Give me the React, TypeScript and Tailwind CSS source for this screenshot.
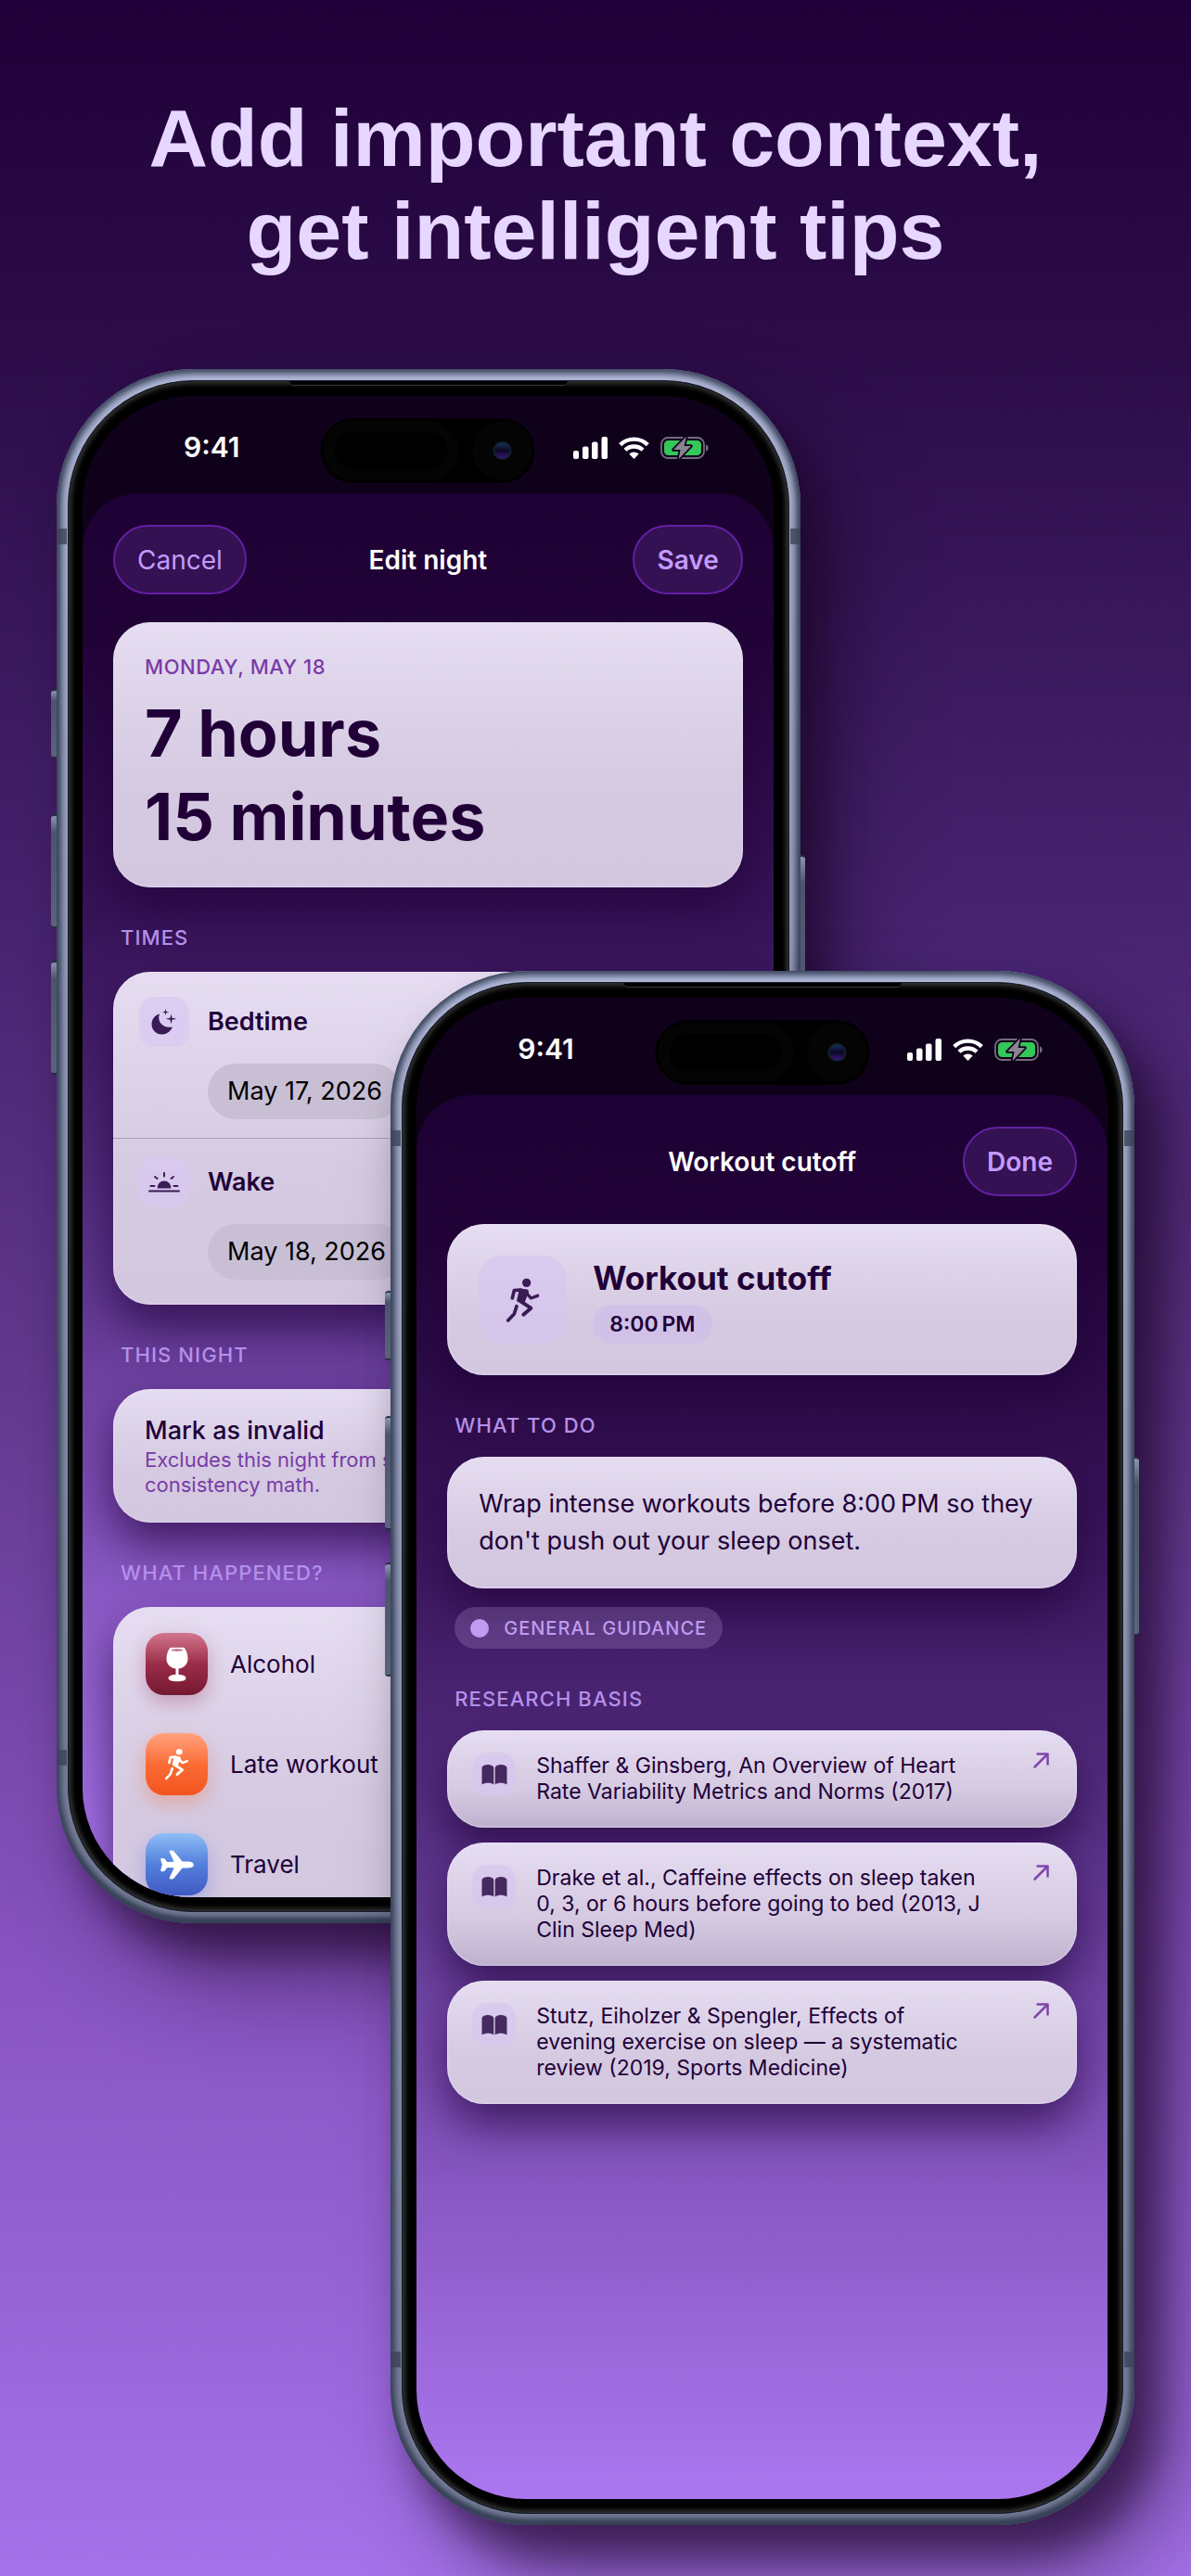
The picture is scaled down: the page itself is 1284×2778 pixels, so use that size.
import type { ReactNode } from "react";
import { IoAirplane } from "react-icons/io5";

function Runner({ className }: { className: string }) {
  return (
    <svg viewBox="430 1036 130 156" className={className} fill="none" stroke="currentColor" strokeLinecap="round" strokeLinejoin="round" aria-hidden="true">
      <circle cx="507" cy="1058" r="14" fill="currentColor" stroke="none" />
      <path d="M461 1108L467 1083L490 1081" strokeWidth="11" />
      <path d="M484 1077L506 1079Q515 1081 514 1089L503 1116L499 1124L479 1121Q473 1116 477 1108Z" fill="currentColor" stroke="none" />
      <path d="M506 1090L521 1108L543 1100" strokeWidth="10" />
      <path d="M488 1118L521 1140L497 1161" strokeWidth="12" />
      <path d="M475 1134L467 1159L447 1180" strokeWidth="11" />
    </svg>
  );
}

function Moon() {
  return (
    <svg viewBox="0 0 30 28" className="w-[30px] text-[#3a1b55]" fill="currentColor" aria-hidden="true">
      <path d="M10 5.500C7 13 13 21.500 24 19.500C21.500 25 17 27.500 12.500 27.500C6 27.500 1.500 22.500 1.500 16.500C1.500 11.500 5 6.500 10 5.500Z" />
      <path d="M22.500 5.500L23.600 9.700L28.500 10.700L23.600 11.800L22.500 16.500L21.400 11.800L16.500 10.700L21.400 9.700Z" />
      <path d="M16.500 0L17.200 2.800L20 3.500L17.200 4.200L16.500 7L15.800 4.200L13 3.500L15.800 2.800Z" />
    </svg>
  );
}

function Sunrise() {
  return (
    <svg viewBox="0 0 34 22" className="w-[34px] text-[#3a1b55]" fill="none" stroke="currentColor" strokeWidth="2" strokeLinecap="round" aria-hidden="true">
      <path d="M9.500 17.500a7.500 8 0 0 1 15 0Z" fill="currentColor" stroke="none" />
      <path d="M1 20.500H33M2.500 15H6.500M27.500 15H31.500M17 1V4.500M7 5L9.500 7M27 5L24.500 7" />
    </svg>
  );
}

function Goblet() {
  return (
    <svg viewBox="0 0 24 38" className="h-[38px]" aria-hidden="true">
      <path fill="white" d="M4.500 .8H19.500C22 4 23.500 8 23.500 13C23.500 19 19 23 13.500 23.500V29.800C18 30.200 21.500 31.500 21.500 33.700C21.500 36 17.500 37.300 12 37.300S2.500 36 2.500 33.700C2.500 31.500 6 30.200 10.500 29.800V23.500C5 23 .5 19 .5 13C.5 8 2 4 4.500 .8Z" />
      <ellipse cx="12" cy="3.500" rx="6.500" ry="1.200" fill="#c4667f" />
    </svg>
  );
}

function Book() {
  return (
    <svg viewBox="0 0 28 24" className="w-7 text-[#452a60]" fill="currentColor" aria-hidden="true">
      <path d="M13.300 22.500C10.500 20.200 4 20.200 .5 22.500V4C2 .3 11.500 -.2 13.300 4Z" />
      <path d="M14.700 22.500C17.500 20.200 24 20.200 27.500 22.500V4C26 .3 16.500 -.2 14.700 4Z" />
    </svg>
  );
}

function Arrow() {
  return (
    <svg viewBox="0 0 17 17" className="w-[17px] shrink-0 text-[#7f46aa]" fill="none" stroke="currentColor" strokeWidth="2.500" strokeLinecap="round" strokeLinejoin="round" aria-hidden="true">
      <path d="M1.500 15.500L15.500 1.500M4.500 1.500H15.500V12.500" />
    </svg>
  );
}

function StatusIcons() {
  return (
    <div className="flex items-center gap-3">
      <svg viewBox="0 0 37 24" className="w-[37px] fill-white" aria-hidden="true">
        <rect x="0" y="15" width="6" height="9" rx="2" />
        <rect x="10" y="10.500" width="6.500" height="13.500" rx="2" />
        <rect x="20" y="5.500" width="6.500" height="18.500" rx="2" />
        <rect x="30.500" y="0" width="6.500" height="24" rx="2" />
      </svg>
      <svg viewBox="0 0 33 24" className="w-[33px] fill-none stroke-white" strokeWidth="4.400" aria-hidden="true">
        <path d="M1.700 8.600A21.300 21.300 0 0 1 31.300 8.600" />
        <path d="M7 14.300A13.600 13.600 0 0 1 26 14.300" />
        <path d="M11.300 18.500A8 8 0 0 1 21.700 18.500L16.500 24Z" fill="white" stroke="none" />
      </svg>
      <svg viewBox="0 0 52 26" className="w-[52px]" aria-hidden="true">
        <rect x="1" y="2" width="46" height="22" rx="7" fill="none" stroke="#756b7b" strokeWidth="1.800" />
        <rect x="4" y="5" width="40" height="16" rx="4.500" fill="#34c759" />
        <path d="M49 9.500C52.500 10.500 52.500 15.500 49 16.500Z" fill="#756b7b" />
        <path d="M28 .8L14 15H21.500L19.500 25.200L33 11H25.500Z" fill="#8b8592" stroke="#11011c" strokeWidth="3.500" strokeLinejoin="round" paintOrder="stroke" />
      </svg>
    </div>
  );
}

function SideButton({ className }: { className: string }) {
  return <span className={`absolute w-2 rounded-sm border-y-2 border-[#252e40] bg-gradient-to-b from-[#8c96b0] via-[#4a556c] via-15% to-[#5a647c] ${className}`} />;
}

function Band({ className }: { className: string }) {
  return <span className={`absolute h-[17px] w-[11px] bg-[#3b4359]/80 ${className}`} />;
}

function Phone({ className, children }: { className: string; children: ReactNode }) {
  return (
    <section className={`relative col-start-1 row-start-1 aspect-[802/1676] w-[69%] ${className}`}>
      <div className="absolute inset-0 rounded-[148px] shadow-[24px_32px_44px_rgba(26,4,36,0.6),50px_64px_100px_rgba(26,4,36,0.4)]" />
      <SideButton className="top-[345px] -left-[6px] h-[75px]" />
      <SideButton className="top-[480px] -left-[6px] h-[123px]" />
      <SideButton className="top-[638px] -left-[6px] h-[123px]" />
      <SideButton className="top-[524px] -right-[5px] h-[193px]" />
      <div className="relative h-full rounded-[148px] bg-gradient-to-b from-[#b4badb] via-[#a3aac8] via-10% to-[#737a94] p-3 shadow-[inset_0_0_7px_5px_#39445b,inset_0_-5px_5px_0_#2b3545]">
        <Band className="top-[172px] left-0" />
        <Band className="top-[172px] right-0" />
        <Band className="bottom-[170px] left-0" />
        <Band className="right-0 bottom-[170px]" />
        <div className="relative h-full rounded-[136px] border border-[#151c2e] bg-black pt-4 pr-4 pb-[15px] pl-[15px] shadow-[inset_0_0_5px_3px_#343433]">
          <span className="absolute top-0 left-1/2 h-[5px] w-[300px] -translate-x-1/2 rounded-b-lg border-b border-[#3a3a3a] bg-black" />
          <div className="h-full overflow-hidden rounded-[118px] bg-[#10011b]">
            <div className="relative flex h-[105px] items-center justify-between pt-[6px] pr-[70px] pl-[109px]">
              <time className="text-[30px] font-semibold text-white">9:41</time>
              <StatusIcons />
              <div className="absolute top-6 left-1/2 flex h-[70px] w-[231px] -translate-x-1/2 items-center justify-between rounded-full bg-black p-[3px]">
                <span className="h-16 w-[146px] rounded-full border-[12px] border-[#040404] bg-black" />
                <span className="flex size-16 items-center justify-center rounded-full bg-[#040405]">
                  <span className="size-5 rounded-full border-2 border-[#12232f] bg-gradient-to-b from-[#123060] via-[#0a0722] to-[#3c1580]" />
                </span>
              </div>
            </div>
            <div className="h-full rounded-t-[60px] bg-[linear-gradient(to_bottom,#1d0034_0%,#230439_10%,#371358_28%,#502a7b_45%,#7f50b8_68%,#9563d2_80%,#ab78f1_94%)] px-[33px] pt-[34px]">
              {children}
            </div>
          </div>
        </div>
      </div>
    </section>
  );
}

function PillButton({ children, className }: { children: ReactNode; className: string }) {
  return (
    <button type="button" className={`h-[75px] rounded-full border-2 border-[#6320a4] bg-[#341152] px-6 text-[28px] text-[#c39bff] ${className}`}>
      {children}
    </button>
  );
}

function NavBar({ left, title, right }: { left?: string; title: string; right: string }) {
  return (
    <header className="mb-[30px] grid grid-cols-[1fr_auto_1fr] items-center">
      <div>{left && <PillButton className="font-normal">{left}</PillButton>}</div>
      <h2 className="text-[28px] font-semibold text-white">{title}</h2>
      <PillButton className="justify-self-end font-semibold">{right}</PillButton>
    </header>
  );
}

const plainCard = "to-[#d3c7e0]";
const shadedCard = "to-[#c1b3d1]";

function Card({ children, className, tone = plainCard }: { children: ReactNode; className: string; tone?: string }) {
  return (
    <div className={`rounded-[40px] bg-gradient-to-b from-[#e6ddf2] via-[#d5cae1] via-60% shadow-[inset_0_0_2px_1px_rgba(240,232,250,0.5),0_24px_48px_rgba(31,2,55,0.65)] ${tone} ${className}`}>
      {children}
    </div>
  );
}

function SectionLabel({ children, className }: { children: ReactNode; className: string }) {
  return <h3 className={`relative px-2 text-[22px] leading-[28px] font-medium tracking-wider text-[#b490ea] ${className}`}>{children}</h3>;
}

function TimeRow({ icon, label, date }: { icon: ReactNode; label: string; date: string }) {
  return (
    <div className="flex gap-5 px-7 py-5">
      <span className="flex size-[54px] items-center justify-center rounded-2xl bg-[#d9c7f2]/70">{icon}</span>
      <div className="flex flex-col items-start gap-[18px]">
        <span className="text-[27px] leading-[54px] font-semibold text-[#210038]">{label}</span>
        <button type="button" className="h-[60px] rounded-full bg-[#c9bfd5] px-[21px] text-[27px] text-black">{date}</button>
      </div>
    </div>
  );
}

const events = [
  { label: "Alcohol", icon: <Goblet />, tile: "from-[#d3758e] via-[#9c2c49] to-[#741831] shadow-[0_8px_20px_rgba(140,30,70,0.3)]" },
  { label: "Late workout", icon: <Runner className="h-[37px]" />, tile: "from-[#ffa27c] via-[#fb6c35] to-[#f2541b] shadow-[0_8px_20px_rgba(250,100,50,0.35)]" },
  { label: "Travel", icon: <IoAirplane className="size-[38px]" aria-hidden="true" />, tile: "from-[#8fbdf6] via-[#5480dc] to-[#4059c4] shadow-[0_8px_20px_rgba(80,110,220,0.35)]" },
];

const papers = [
  { title: "Shaffer & Ginsberg, An Overview of Heart Rate Variability Metrics and Norms (2017)", tone: shadedCard },
  { title: "Drake et al., Caffeine effects on sleep taken 0, 3, or 6 hours before going to bed (2013, J Clin Sleep Med)", tone: shadedCard },
  { title: "Stutz, Eiholzer & Spengler, Effects of evening exercise on sleep — a systematic review (2019, Sports Medicine)", tone: plainCard },
];

function EditNight() {
  return (
    <>
      <NavBar left="Cancel" title="Edit night" right="Save" />
      <Card className="px-[34px] pt-[34px] pb-[31px]">
        <p className="text-[22px] leading-7 font-medium tracking-wide text-[#7a3ba8]">MONDAY, MAY 18</p>
        <p className="mt-[13px] text-[70px] leading-[90px] font-bold text-[#210038]">
          7 hours
          <br />
          15 minutes
        </p>
      </Card>
      <SectionLabel className="mt-10 mb-[23px]">TIMES</SectionLabel>
      <Card className="py-[7px]">
        <TimeRow icon={<Moon />} label="Bedtime" date="May 17, 2026" />
        <hr className="border-[#aba0b8]" />
        <TimeRow icon={<Sunrise />} label="Wake" date="May 18, 2026" />
      </Card>
      <SectionLabel className="mt-10 mb-[23px]">THIS NIGHT</SectionLabel>
      <Card className="px-[34px] py-[27px]">
        <p className="text-[27px] leading-9 font-medium text-[#210038]">Mark as invalid</p>
        <p className="text-[22px] leading-[27px] text-[#7a3ba8]">
          Excludes this night from s
          <br />
          consistency math.
        </p>
      </Card>
      <SectionLabel className="mt-10 mb-[23px]">WHAT HAPPENED?</SectionLabel>
      <Card className="flex flex-col gap-[41px] px-[35px] py-7">
        {events.map((e) => (
          <div key={e.label} className="flex items-center gap-6">
            <span className={`flex size-[67px] items-center justify-center rounded-[20px] bg-gradient-to-b text-white ${e.tile}`}>{e.icon}</span>
            <span className="text-[26px] text-[#210038]">{e.label}</span>
          </div>
        ))}
      </Card>
    </>
  );
}

function WorkoutCutoff() {
  return (
    <>
      <NavBar title="Workout cutoff" right="Done" />
      <Card className="flex items-center gap-7 px-[34px] py-[34px]">
        <span className="flex size-[95px] items-center justify-center rounded-[26px] bg-[#d5c4ef]/70">
          <Runner className="h-[52px] text-[#3a1b55]" />
        </span>
        <div>
          <p className="text-[35px] leading-[46px] font-bold text-[#210038]">Workout cutoff</p>
          <p className="mt-[6px] inline-block rounded-full bg-[#d1c1e8] px-[18px] text-[23px] leading-[42px] font-semibold text-[#210038]">8:00&#8201;PM</p>
        </div>
      </Card>
      <SectionLabel className="mt-10 mb-5">WHAT TO DO</SectionLabel>
      <Card className="px-[34px] py-[31px]">
        <p className="text-[27px] leading-10 text-[#210038]">Wrap intense workouts before 8:00&#8201;PM so they don't push out your sleep onset.</p>
      </Card>
      <p className="mt-5 ml-2 inline-flex h-[45px] items-center gap-4 rounded-full bg-[#d9b8ff]/20 px-[17px] text-[20px] font-medium tracking-wider text-[#bf9cf0]">
        <span className="size-5 rounded-full bg-[#bf9cf0]" />
        GENERAL GUIDANCE
      </p>
      <SectionLabel className="mt-10 mb-5">RESEARCH BASIS</SectionLabel>
      <div className="flex flex-col gap-4">
        {papers.map((p) => (
          <Card key={p.title} tone={p.tone} className="pt-6 pr-[30px] pb-[25px] pl-[27px]">
            <a href="#" className="flex items-start gap-[22px]">
              <span className="flex size-[47px] shrink-0 items-center justify-center rounded-[16px] bg-[#d6c6f0]/70"><Book /></span>
              <span className="max-w-[484px] flex-1 text-[23px] leading-7 text-[#210038]">{p.title}</span>
              <span className="ml-auto"><Arrow /></span>
            </a>
          </Card>
        ))}
      </div>
    </>
  );
}

export default function App() {
  return (
    <main className="min-h-screen overflow-hidden bg-[linear-gradient(to_bottom,#1f0038_0%,#2c0d49_14%,#4a2674_38%,#60378c_52%,#8451bc_74%,#a572ea_100%)] pb-[55px] font-['Inter',sans-serif]">
      <h1 className="pt-[99px] text-center font-['Liberation_Sans',Arial,sans-serif] text-[88px] leading-[100px] font-bold text-[#e7d6ff]">
        Add important context,
        <br />
        get intelligent tips
      </h1>
      <div className="mt-[99px] grid px-[61px]">
        <Phone className="justify-self-start self-start">
          <EditNight />
        </Phone>
        <Phone className="mt-[649px] justify-self-end">
          <WorkoutCutoff />
        </Phone>
      </div>
    </main>
  );
}
